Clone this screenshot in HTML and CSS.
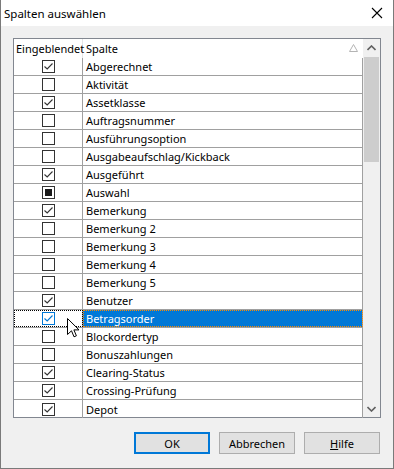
FILE: index.html
```html
<!DOCTYPE html>
<html>
<head>
    <title>Spalten auswählen</title>
    <link rel="stylesheet" href="styles.css">
</head>
<body>
    <div class="window">
        <div class="titlebar">
            <span class="title">Spalten auswählen</span>
            <svg class="close" width="12" height="12" viewBox="0 0 12 12">
                <path d="M1 1 L11 11 M11 1 L1 11" stroke="#000" stroke-width="1.1" fill="none"/>
            </svg>
        </div>
        <div class="content">
            <div class="gridbox">
                <div class="list">
                    <div class="head">
                        <div class="c1">Eingeblendet</div>
                        <div class="c2">Spalte
                            <svg class="sort" width="9" height="8" viewBox="0 0 9 8">
                                <path d="M4.5 0.5 L8.5 7.5 L0.5 7.5 Z" stroke="#b4b4b4" fill="none"/>
                            </svg>
                        </div>
                    </div>
                    <div id="rows"></div>
                </div>
                <div class="scrollbar">
                    <div class="arrow">
                        <svg width="9" height="6" viewBox="0 0 9 6"><path d="M0.5 5 L4.5 1 L8.5 5" stroke="#606060" stroke-width="1.6" fill="none"/></svg>
                    </div>
                    <div class="track">
                        <div class="thumb"></div>
                    </div>
                    <div class="arrow">
                        <svg width="9" height="6" viewBox="0 0 9 6"><path d="M0.5 1 L4.5 5 L8.5 1" stroke="#606060" stroke-width="1.6" fill="none"/></svg>
                    </div>
                </div>
            </div>
            <div class="buttons">
                <button class="default">OK</button>
                <button>Abbrechen</button>
                <button><u>H</u>ilfe</button>
            </div>
            <svg class="cursor" width="13" height="20" viewBox="0 0 13 20">
                <path d="M0.5 0.5 L0.5 16.5 L4.5 12.8 L7 18.8 L9.4 17.8 L6.9 11.9 L12 11.9 Z" fill="#fff" stroke="#000" stroke-width="1"/>
            </svg>
        </div>
    </div>
    <script>
        // c = angehakt, i = unbestimmt, leer = nicht angehakt
        const rows = [
            ['Abgerechnet', 'c'], ['Aktivität', ''], ['Assetklasse', 'c'],
            ['Auftragsnummer', ''], ['Ausführungsoption', ''],
            ['Ausgabeaufschlag/Kickback', ''], ['Ausgeführt', 'c'], ['Auswahl', 'i'],
            ['Bemerkung', 'c'], ['Bemerkung 2', ''], ['Bemerkung 3', ''],
            ['Bemerkung 4', ''], ['Bemerkung 5', ''], ['Benutzer', 'c'],
            ['Betragsorder', 'c', true], ['Blockordertyp', ''], ['Bonuszahlungen', ''],
            ['Clearing-Status', 'c'], ['Crossing-Prüfung', 'c'], ['Depot', 'c']
        ];

        const tick = '<path d="M2.5 6.5 L5.2 9 L10.5 3.5" stroke="currentColor" stroke-width="1.1" fill="none"/>';
        const fill = '<rect x="3" y="3" width="7" height="7" fill="#1a1a1a"/>';

        let html = '';
        rows.forEach(r => {
            const mark = r[1] === 'c' ? tick : (r[1] === 'i' ? fill : '');
            html += '<div class="row' + (r[2] ? ' selected' : '') + '">' +
                '<div class="c1"><svg class="box" width="13" height="13" viewBox="0 0 13 13">' +
                '<rect x="0.5" y="0.5" width="12" height="12" fill="#fff" stroke="currentColor"/>' + mark +
                '</svg></div><div class="c2">' + r[0] + '</div></div>';
        });
        document.getElementById('rows').innerHTML = html;
    </script>
</body>
</html>
```

FILE: styles.css
```css
* {
    box-sizing: border-box;
}

body {
    margin: 0;
    font-family: "Noto Sans", "Open Sans", sans-serif;
    font-size: 11px;
    color: #000;
    background: #fff;
}

.window {
    width: 394px;
    height: 469px;
    border: 1px solid #7a7a7a;
    border-top: none;
    background: #f0f0f0;
    display: flex;
    flex-direction: column;
}

.titlebar {
    height: 26px;
    background: #fff;
    display: flex;
    align-items: center;
    justify-content: space-between;
    padding: 0 10px 0 3px;
}

.title {
    font-size: 11.5px;
}

.content {
    position: relative;
    padding: 12px 12px 0 12px;
}

.gridbox {
    width: 368px;
    height: 380px;
    border: 1px solid #828790;
    background: #fff;
    display: flex;
}

.list {
    width: 349px;
}

.head,
.row {
    display: flex;
}

.head {
    height: 19px;
}

.row {
    height: 18px;
    border-bottom: 1px solid #a0a0a0;
}

.row:last-child {
    border-bottom: none;
}

.c1 {
    width: 69px;
    border-right: 1px solid #a0a0a0;
    display: flex;
    align-items: center;
    justify-content: center;
    color: #333;
}

.head .c1 {
    color: #000;
    justify-content: flex-start;
    padding-left: 2px;
    border-right-color: #e5e5e5;
}

.c2 {
    width: 280px;
    border-right: 1px solid #a0a0a0;
    padding-left: 3px;
    display: flex;
    align-items: center;
    white-space: nowrap;
}

.head .c2 {
    border-right: none;
    justify-content: space-between;
    padding-right: 5px;
}

.sort {
    margin-bottom: 2px;
}

.box {
    display: block;
}

.selected .c1 {
    outline: 1px dotted #000;
    outline-offset: -1px;
    color: #0078d7;
}

.selected .c2 {
    background: #0078d7;
    color: #fff;
    outline: 1px dotted #ff8c00;
    outline-offset: -1px;
}

.scrollbar {
    width: 17px;
    background: #f0f0f0;
    display: flex;
    flex-direction: column;
}

.arrow {
    height: 17px;
    display: flex;
    align-items: center;
    justify-content: center;
}

.track {
    flex: 1;
    padding: 1px 1px 0 1px;
}

.thumb {
    height: 105px;
    background: #cdcdcd;
}

.buttons {
    display: flex;
    justify-content: flex-end;
    gap: 9px;
    margin-top: 14px;
    padding-right: 1px;
}

button {
    width: 76px;
    height: 22px;
    font-family: "Noto Sans", "Open Sans", sans-serif;
    font-size: 11px;
    color: #000;
    background: #e1e1e1;
    border: 1px solid #adadad;
    padding: 0;
}

button.default {
    border: 2px solid #0078d7;
}

.cursor {
    position: absolute;
    left: 66px;
    top: 292px;
}
```
